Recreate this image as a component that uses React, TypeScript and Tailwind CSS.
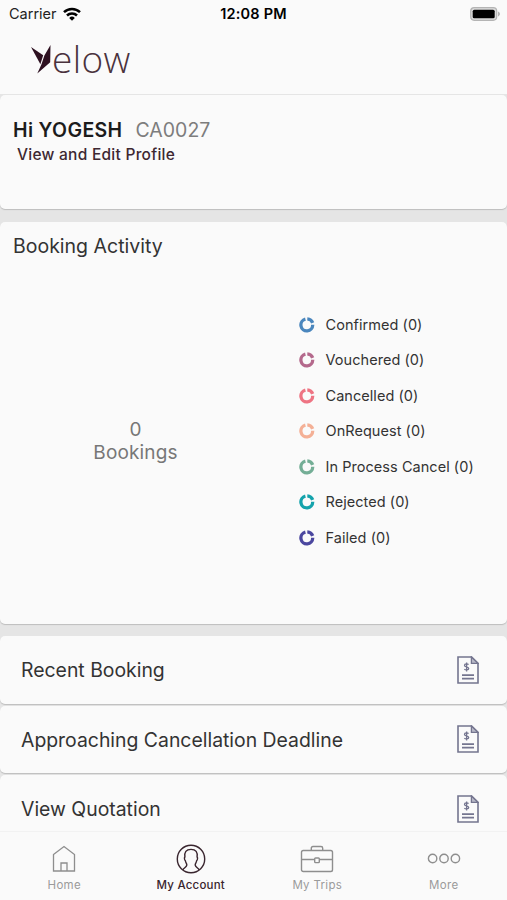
import type { ReactNode } from 'react'

const statuses = [
  { label: 'Confirmed', count: 0, color: '#4a86bd' },
  { label: 'Vouchered', count: 0, color: '#b4698c' },
  { label: 'Cancelled', count: 0, color: '#ee7483' },
  { label: 'OnRequest', count: 0, color: '#f4b096' },
  { label: 'In Process Cancel', count: 0, color: '#74ae96' },
  { label: 'Rejected', count: 0, color: '#14a3ac' },
  { label: 'Failed', count: 0, color: '#4b479f' },
]

const links = ['Recent Booking', 'Approaching Cancellation Deadline', 'View Quotation']

function WifiIcon() {
  return (
    <svg width="18" height="14" viewBox="0 0 18 14" fill="none" stroke="#000" strokeWidth="2.5">
      <path d="M1 5.2a11.4 11.4 0 0 1 16 0" />
      <path d="M4 8.5a7.1 7.1 0 0 1 10 0" />
      <path d="M9 13.8 6.2 10.9a4 4 0 0 1 5.6 0Z" fill="#000" stroke="none" />
    </svg>
  )
}

function BatteryIcon() {
  return (
    <svg width="31" height="14" viewBox="0 0 31 14">
      <rect x=".7" y=".7" width="26" height="12.6" rx="3.5" fill="#dcdcdc" stroke="#b4b4b4" strokeWidth="1.2" />
      <rect x="2.7" y="2.7" width="22" height="8.6" rx="1.6" fill="#000" />
      <path d="M28 4.6c2.6.8 2.6 4 0 4.8Z" fill="#b4b4b4" />
    </svg>
  )
}

function Logo() {
  return (
    <div className="flex items-start">
      <svg width="21" height="29" viewBox="0 0 21 29" fill="#2d1020">
        <path d="M0 2 12.2 10.2 9.400 19.200Z" />
        <path d="M19.500 0 19.200 17.200 6.300 28.500 10.400 19.500 13.400 10.500Z" />
      </svg>
      <span className="-mt-[8px] font-['Open_Sans'] text-[37px] leading-[44px] font-light tracking-[0.4px] text-[#4a323d]">
        elow
      </span>
    </div>
  )
}

function DonutIcon({ color }: { color: string }) {
  return (
    <svg width="16" height="16" viewBox="0 0 16 16" fill="none" stroke={color} strokeWidth="3.3">
      <path d="M6.4 2.200A5.900 5.900 0 1 0 13.700 7.800" />
      <path d="M8.300 1.900A6.200 6.200 0 0 1 13.700 5.900" />
    </svg>
  )
}

function InvoiceIcon() {
  return (
    <svg width="22" height="28" viewBox="0 0 22 28" fill="none" stroke="#74758f" strokeWidth="1.6">
      <path d="M1 1h13.6L21 7.4V27H1Z" />
      <path d="M14.4 1v6.4H21Z" fill="#b9bac8" strokeWidth="1.3" />
      <path d="M5 19.2h12M5 22.600h12" strokeWidth="1.8" />
      <path d="M11.5 8.600c-.6-.9-4-1.100-4 .8 0 2 4.200 1 4.200 3.100 0 1.900-3.500 1.700-4.300.6M9.600 6.600v8.800" strokeWidth="1.3" />
    </svg>
  )
}

function HomeIcon() {
  return (
    <svg width="24" height="28" viewBox="0 0 24 28" fill="none" stroke="currentColor" strokeWidth="1.3">
      <path d="M1.500 9.600 12 1.500l10.500 8.100V26h-21Z" />
      <path d="M9 26v-8h6v8" />
    </svg>
  )
}

function AccountIcon() {
  return (
    <svg width="30" height="30" viewBox="0 0 30 30" fill="none" stroke="currentColor" strokeWidth="1.400">
      <circle cx="15" cy="15" r="13.700" />
      <path d="M6.800 25.900c1-2.100 3.600-2.600 4-4.800.2-1.600-1.200-2.200-1.400-4.300C8.300 16 8.200 13.500 8.900 12.900 8.300 8 10 5.400 15 5.400S21.700 8 21.100 12.900c.7.600.6 3.100-.5 3.900-.2 2.100-1.600 2.700-1.400 4.300.4 2.200 3 2.700 4 4.800" />
    </svg>
  )
}

function BriefcaseIcon() {
  return (
    <svg width="34" height="28" viewBox="0 0 34 28" fill="none" stroke="currentColor" strokeWidth="1.400">
      <rect x="1.500" y="5.500" width="31" height="21" rx="1.800" />
      <path d="M11.300 5.200V3.200q0-1.700 1.700-1.700h8q1.700 0 1.700 1.700v2M1.500 14.500h13M19.500 14.500h13" />
      <rect x="14.700" y="13" width="4.600" height="4.600" rx=".8" />
    </svg>
  )
}

function MoreIcon() {
  return (
    <svg width="34" height="12" viewBox="0 0 34 12" fill="none" stroke="currentColor" strokeWidth="1.400">
      <circle cx="5.600" cy="5.500" r="4.200" />
      <circle cx="17" cy="5.500" r="4.200" />
      <circle cx="28.400" cy="5.500" r="4.200" />
    </svg>
  )
}

function Card({ className, children }: { className: string; children: ReactNode }) {
  return (
    <section className={`shrink-0 rounded-[5px] bg-[#fafafa] shadow-[0_1px_1px_#bdbdbd] ${className}`}>{children}</section>
  )
}

function Tab({ icon, label, active }: { icon: ReactNode; label: string; active?: boolean }) {
  return (
    <button className={`flex flex-1 flex-col items-center ${active ? 'text-[#39252e]' : 'text-[#8e8e8e]'}`}>
      <span className="flex h-[30px] items-center">{icon}</span>
      <span className={`mt-[3px] text-[11.500px] leading-4 ${active ? 'font-medium tracking-[0.2px]' : 'tracking-[0.3px] text-[#9b9b9b]'}`}>
        {label}
      </span>
    </button>
  )
}

export default function App() {
  return (
    <div className="flex h-[900px] w-full flex-col overflow-hidden bg-[#e5e5e5] font-['Inter',sans-serif] text-[#333]">
      <header className="h-[94px] shrink-0 bg-[#fafafa]">
        <div className="grid h-[27px] grid-cols-[1fr_auto_1fr] items-center pr-[6px] pl-[9px] text-[14.500px] text-[#222]">
          <div className="flex items-center gap-[6px]">
            <span>Carrier</span>
            <WifiIcon />
          </div>
          <span className="-ml-[3px] font-semibold tracking-[0.2px] text-black">12:08 PM</span>
          <div className="flex justify-end">
            <BatteryIcon />
          </div>
        </div>
        <div className="mt-[18px] ml-[31px]">
          <Logo />
        </div>
      </header>

      <Card className="mt-px h-[114px] px-[13px] pt-[23px]">
        <h1 className="flex items-baseline gap-[13px] text-[19.500px] leading-6">
          <span className="font-semibold tracking-[0.35px] text-[#1c1c1c]">Hi YOGESH</span>
          <span className="text-[#7d7d7d]">CA0027</span>
        </h1>
        <a className="mt-px ml-[4px] block text-[15.500px] leading-6 font-medium tracking-[0.26px] text-[#3d2832]">
          View and Edit Profile
        </a>
      </Card>

      <Card className="mt-[13px] h-[402px]">
        <h2 className="pt-[12px] pl-[13px] text-[19.500px] leading-6">Booking Activity</h2>
        <div className="mt-[49px] flex">
          <div className="flex h-[268px] w-[271px] shrink-0 flex-col items-center justify-center text-[19px] leading-[23px] tracking-[0.15px] text-[#777]">
            <span>0</span>
            <span>Bookings</span>
          </div>
          <ul className="ml-[27.500px]">
            {statuses.map(s => (
              <li key={s.label} className="flex h-[35.500px] items-center gap-[11px] text-[14.500px] tracking-[0.05px]">
                <DonutIcon color={s.color} />
                <span>{s.label} ({s.count})</span>
              </li>
            ))}
          </ul>
        </div>
      </Card>

      <div className="mt-[12px] flex min-h-0 flex-1 flex-col gap-[2px] overflow-hidden">
        {links.map(label => (
          <Card key={label} className="flex h-[67.500px] items-center justify-between pr-[28px] pl-[21px] text-[19.400px]">
            <span className="pt-[2px]">{label}</span>
            <InvoiceIcon />
          </Card>
        ))}
      </div>

      <nav className="flex h-[69px] shrink-0 border-t border-[#f2f2f2] bg-[#fafafa] pt-[12px] pl-px">
        <Tab icon={<HomeIcon />} label="Home" />
        <Tab icon={<AccountIcon />} label="My Account" active />
        <Tab icon={<BriefcaseIcon />} label="My Trips" />
        <Tab icon={<MoreIcon />} label="More" />
      </nav>
    </div>
  )
}
